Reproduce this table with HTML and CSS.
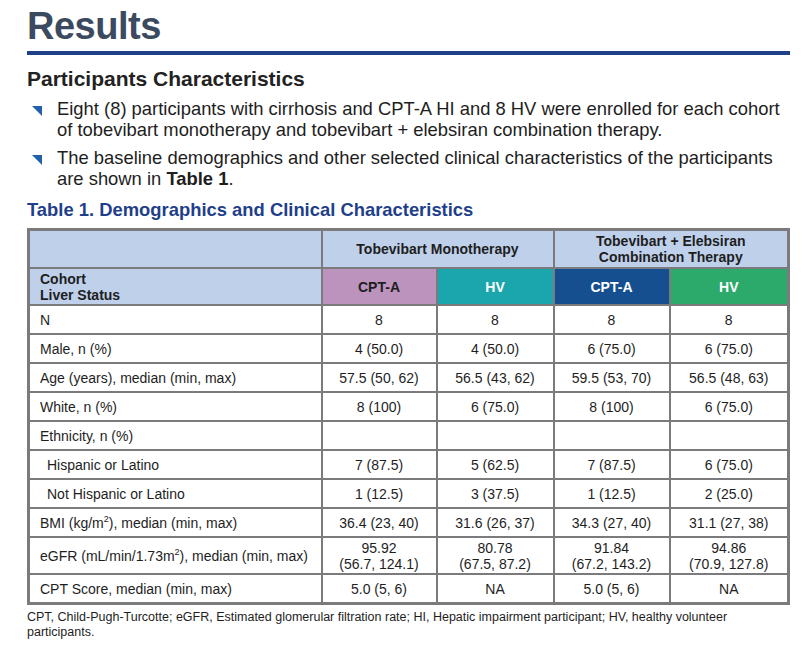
FILE: index.html
```html
<!DOCTYPE html>
<html lang="en">
<head>
    <meta charset="UTF-8">
    <title>Results</title>
    <link rel="stylesheet" href="styles.css">
</head>
<body>
    <div class="page">
        <h1 class="title">Results</h1>
        <div class="rule"></div>

        <h2 class="subhead">Participants Characteristics</h2>
        <ul class="bullets">
            <li>Eight (8) participants with cirrhosis and CPT-A HI and 8 HV were enrolled for each cohort of tobevibart monotherapy and tobevibart + elebsiran combination therapy.</li>
            <li>The baseline demographics and other selected clinical characteristics of the participants are shown in <b>Table 1</b>.</li>
        </ul>

        <div class="caption">Table 1. Demographics and Clinical Characteristics</div>
        <table class="data">
            <colgroup>
                <col class="c-label">
                <col class="c1">
                <col class="c2">
                <col class="c3">
                <col class="c4">
            </colgroup>
            <tr class="head1">
                <th></th>
                <th colspan="2">Tobevibart Monotherapy</th>
                <th colspan="2">Tobevibart + Elebsiran<br>Combination Therapy</th>
            </tr>
            <tr class="head2">
                <th class="label">Cohort<br>Liver Status</th>
                <th class="mono-cpt">CPT-A</th>
                <th class="mono-hv">HV</th>
                <th class="combo-cpt">CPT-A</th>
                <th class="combo-hv">HV</th>
            </tr>
            <tr><td>N</td><td>8</td><td>8</td><td>8</td><td>8</td></tr>
            <tr><td>Male, n (%)</td><td>4 (50.0)</td><td>4 (50.0)</td><td>6 (75.0)</td><td>6 (75.0)</td></tr>
            <tr><td>Age (years), median (min, max)</td><td>57.5 (50, 62)</td><td>56.5 (43, 62)</td><td>59.5 (53, 70)</td><td>56.5 (48, 63)</td></tr>
            <tr><td>White, n (%)</td><td>8 (100)</td><td>6 (75.0)</td><td>8 (100)</td><td>6 (75.0)</td></tr>
            <tr><td>Ethnicity, n (%)</td><td></td><td></td><td></td><td></td></tr>
            <tr><td class="sub">Hispanic or Latino</td><td>7 (87.5)</td><td>5 (62.5)</td><td>7 (87.5)</td><td>6 (75.0)</td></tr>
            <tr><td class="sub">Not Hispanic or Latino</td><td>1 (12.5)</td><td>3 (37.5)</td><td>1 (12.5)</td><td>2 (25.0)</td></tr>
            <tr><td>BMI (kg/m<sup>2</sup>), median (min, max)</td><td>36.4 (23, 40)</td><td>31.6 (26, 37)</td><td>34.3 (27, 40)</td><td>31.1 (27, 38)</td></tr>
            <tr class="tall"><td>eGFR (mL/min/1.73m<sup>2</sup>), median (min, max)</td><td>95.92<br>(56.7, 124.1)</td><td>80.78<br>(67.5, 87.2)</td><td>91.84<br>(67.2, 143.2)</td><td>94.86<br>(70.9, 127.8)</td></tr>
            <tr><td>CPT Score, median (min, max)</td><td>5.0 (5, 6)</td><td>NA</td><td>5.0 (5, 6)</td><td>NA</td></tr>
        </table>
        <p class="note">CPT, Child-Pugh-Turcotte; eGFR, Estimated glomerular filtration rate; HI, Hepatic impairment participant; HV, healthy volunteer participants.</p>
    </div>
</body>
</html>
```

FILE: styles.css
```css
body{
    margin: 0;
    background: #fff;
    font-family: "Liberation Sans", Arial, sans-serif;
    color: #1e1e1e;
}

.page{
    padding: 6px 22px 0 27px;
}

.title{
    margin: 0;
    font-size: 38px;
    line-height: 40px;
    font-weight: bold;
    color: #3b4a5e;
    letter-spacing: -0.5px;
}

.rule{
    height: 4px;
    margin-top: 5px;
    background: #1f3f87;
}

.subhead{
    margin: 12px 0 0;
    font-size: 21px;
    line-height: 24px;
    font-weight: bold;
    color: #222;
}

.bullets{
    list-style: none;
    margin: 7px 0 0;
    padding: 0 0 0 30px;
    width: 733px;
}

.bullets li{
    position: relative;
    font-size: 18.4px;
    line-height: 21px;
    margin-bottom: 7px;
}

.bullets li::before{
    content: "";
    position: absolute;
    left: -25px;
    top: 8px;
    border-top: 10px solid #2160ac;
    border-left: 10px solid transparent;
}

.caption{
    margin-top: 10px;
    font-size: 18.4px;
    line-height: 22px;
    font-weight: bold;
    color: #1f3f8a;
}

.data{
    margin-top: 7px;
    width: 761px;
    border-collapse: collapse;
    border: 3px solid #7b7b7d;
    font-size: 14px;
    table-layout: fixed;
}

.c-label{ width: 293px; }
.c1{ width: 115px; }
.c2{ width: 117px; }
.c3{ width: 116px; }
.c4{ width: 119px; }

.data th,
.data td{
    border: 2px solid #7b7b7d;
    padding: 0 4px;
    text-align: center;
    line-height: 16px;
}

.data td{
    height: 27px;
}

.data td:first-child{
    text-align: left;
    padding-left: 10px;
}

.data td.sub{
    padding-left: 17px;
}

.data sup{
    font-size: 9px;
    line-height: 0;
}

.head1 th{
    height: 36px;
    background: #bfd0eb;
}

.head2 th{
    height: 35px;
    color: #fff;
}

.head2 th.label{
    background: #bfd0eb;
    color: #1e1e1e;
    text-align: left;
    padding-left: 10px;
}

.head2 .mono-cpt{ background: #bc93bd; color: #1e1e1e; }
.head2 .mono-hv{ background: #1ba6ad; }
.head2 .combo-cpt{ background: #154f8f; }
.head2 .combo-hv{ background: #2baa6c; }

.data tr.tall td{
    height: 35px;
}

.note{
    margin: 5px 0 0;
    font-size: 12.5px;
    line-height: 15px;
    color: #1e1e1e;
}
```
